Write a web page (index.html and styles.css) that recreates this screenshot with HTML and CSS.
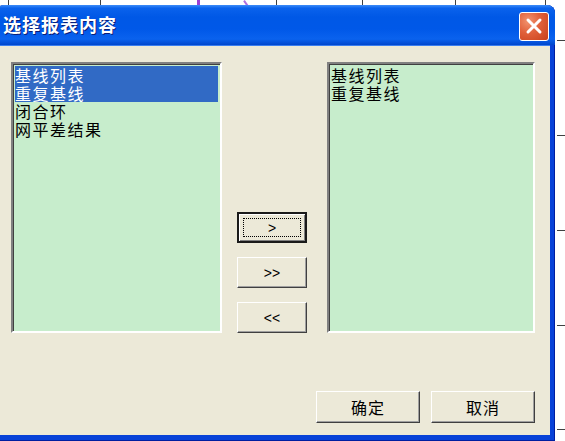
FILE: index.html
```html
<!DOCTYPE html>
<html>
<head>
<meta charset="utf-8">
<link rel="stylesheet" href="styles.css">
</head>
<body>
<div class="desk">
  <span class="tick tick-top" style="left:8px"></span>
  <span class="tick tick-top" style="left:100px"></span>
  <span class="tick tick-top tick-purple" style="left:197px"></span>
  <span class="tick tick-top tick-diag"></span>
  <span class="tick tick-top" style="left:276px"></span>
  <span class="tick tick-top" style="left:362px"></span>
  <span class="tick tick-top" style="left:455px"></span>
  <span class="tick tick-top" style="left:545px"></span>
  <span class="tick tick-right" style="top:40px"></span>
  <span class="tick tick-right" style="top:135px"></span>
  <span class="tick tick-right" style="top:230px"></span>
  <span class="tick tick-right" style="top:325px"></span>
  <span class="tick tick-right" style="top:429px"></span>

  <div class="window">
    <div class="titlebar">
      <span class="title">选择报表内容</span>
      <span class="close">
        <svg width="20" height="20" viewBox="0 0 20 20"><path d="M4 4 L16 16 M16 4 L4 16" stroke="#fff" stroke-width="3" stroke-linecap="round"/></svg>
      </span>
    </div>
    <div class="client">
      <div class="main">
        <div class="listbox left-list">
          <div class="item selected">基线列表</div>
          <div class="item selected">重复基线</div>
          <div class="item">闭合环</div>
          <div class="item">网平差结果</div>
        </div>
        <div class="movers">
          <button class="btn btn-move btn-default"><span class="focus">&gt;</span></button>
          <button class="btn btn-move">&gt;&gt;</button>
          <button class="btn btn-move">&lt;&lt;</button>
        </div>
        <div class="listbox right-list">
          <div class="item">基线列表</div>
          <div class="item">重复基线</div>
        </div>
      </div>
      <div class="footer">
        <button class="btn btn-action">确定</button>
        <button class="btn btn-action">取消</button>
      </div>
    </div>
  </div>
</div>
</body>
</html>
```

FILE: styles.css
```css
html, body {
  margin: 0;
  padding: 0;
  background: #ffffff;
  overflow: hidden;
}
.desk {
  position: relative;
  width: 565px;
  height: 441px;
  overflow: hidden;
  font-family: "Noto Sans CJK SC", "Liberation Sans", sans-serif;
}
.tick {
  position: absolute;
  background: #404040;
}
.tick-top {
  top: 0;
  width: 1px;
  height: 5px;
}
.tick-purple {
  background: #9b3fd6;
  width: 3px;
}
.tick-diag {
  left: 245px;
  width: 2px;
  height: 7px;
  background: #b070e0;
  transform: rotate(-35deg);
}
.tick-right {
  right: 0;
  width: 8px;
  height: 1px;
}
.window {
  position: absolute;
  left: -4px;
  top: 5px;
  width: 559px;
  height: 436px;
  background: #0842d8;
  border-radius: 8px 8px 0 0;
  display: flex;
  flex-direction: column;
  box-sizing: border-box;
  padding: 0 5px 6px 4px;
  box-shadow: inset -1px 0 0 #001ea0, inset 0 -1px 0 #001ea0;
}
.titlebar {
  height: 40px;
  margin: 0 -5px 0 -4px;
  padding: 0 6px 0 7px;
  display: flex;
  align-items: center;
  justify-content: space-between;
  border-radius: 8px 8px 0 0;
  background: linear-gradient(to bottom, #3d8cf8 0%, #0a62ec 8%, #0058e6 30%, #0058e8 60%, #0a62ee 85%, #0046cc 100%);
}
.title {
  color: #ffffff;
  font-weight: bold;
  font-size: 18px;
  letter-spacing: 1px;
  text-shadow: 1px 1px 0 #0a1e78;
  margin-top: -2px;
}
.close {
  width: 30px;
  height: 29px;
  box-sizing: border-box;
  border: 1px solid #ffffff;
  border-radius: 3px;
  background: radial-gradient(circle at 30% 30%, #f29470 0%, #e0603a 45%, #c8401a 100%);
  display: flex;
  align-items: center;
  justify-content: center;
  margin-top: 2px;
}
.client {
  flex: 1;
  background: #ece9d8;
  border-top: 1px solid #3a7ef0;
  display: flex;
  flex-direction: column;
  padding: 16px 15px 0 11px;
}
.main {
  display: flex;
  align-items: flex-start;
}
.listbox {
  height: 271px;
  box-sizing: border-box;
  background: #c7edcc;
  border-top: 2px solid #808080;
  border-left: 2px solid #808080;
  border-right: 2px solid #ffffff;
  border-bottom: 2px solid #ffffff;
  box-shadow: inset 1px 1px 0 #404040;
  padding: 2px 2px;
  font-size: 16px;
  letter-spacing: 1.5px;
  line-height: 18px;
  color: #000000;
}
.left-list {
  width: 211px;
}
.right-list {
  width: 208px;
  margin-left: 20px;
}
.item {
  padding-left: 0;
  height: 18px;
  white-space: nowrap;
}
.item.selected {
  background: #316ac5;
  color: #ffffff;
}
.movers {
  width: 70px;
  margin-left: 15px;
  padding-top: 150px;
  display: flex;
  flex-direction: column;
  gap: 14px;
}
.btn {
  font-family: "Noto Sans CJK SC", "Liberation Sans", sans-serif;
  background: #ece9d8;
  border-top: 1px solid #ffffff;
  border-left: 1px solid #ffffff;
  border-right: 1px solid #404040;
  border-bottom: 1px solid #404040;
  box-shadow: inset -1px -1px 0 #a0a0a0;
  padding: 0;
  margin: 0;
  color: #000;
  box-sizing: border-box;
}
.btn-move {
  width: 70px;
  height: 31px;
  font-size: 14px;
  font-family: "Liberation Sans", sans-serif;
}
.btn-default {
  border: 2px solid #1a1a1a;
  box-shadow: inset 1px 1px 0 #ffffff, inset -1px -1px 0 #808080;
  display: flex;
  align-items: center;
  justify-content: center;
}
.focus {
  display: block;
  width: 58px;
  height: 19px;
  line-height: 19px;
  border: 1px dotted #000;
  box-sizing: border-box;
}
.footer {
  display: flex;
  justify-content: flex-end;
  gap: 11px;
  margin-top: 58px;
}
.btn-action {
  width: 104px;
  height: 32px;
  font-size: 16px;
  letter-spacing: 1px;
  font-weight: normal;
}
```
